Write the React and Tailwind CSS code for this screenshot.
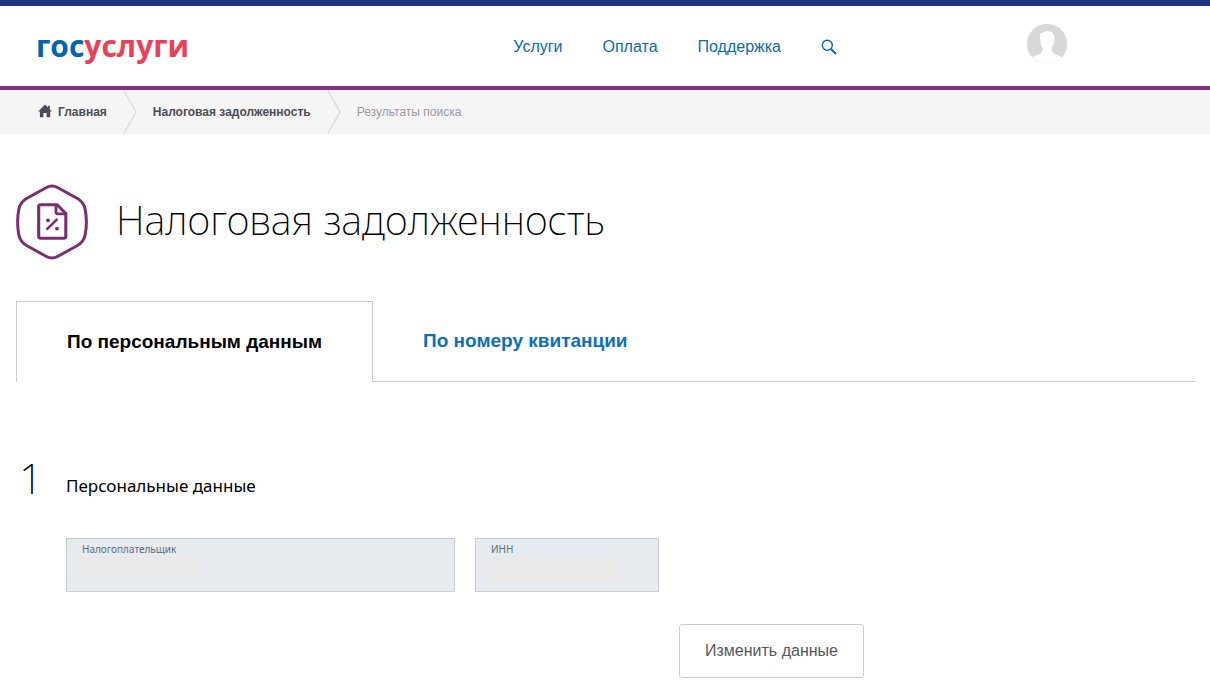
import React from "react";

const navLinks = ["Услуги", "Оплата", "Поддержка"];

function HomeIcon() {
  return (
    <svg viewBox="0 0 14 14" className="size-[14px] -mt-[2px]" fill="currentColor" aria-hidden="true">
      <path d="M7 0.600L9.900 3.400V1.700H11.800V5.200L13.900 7.400H12.200V13.300H8.600V9H5.400V13.300H1.900V7.400H0.100Z" />
    </svg>
  );
}

function SearchIcon() {
  return (
    <svg viewBox="0 0 16 16" className="size-4" fill="none" stroke="currentColor" aria-hidden="true">
      <circle cx="6.300" cy="6.300" r="5" strokeWidth="1.500" />
      <path d="M10 10l5 5" strokeWidth="2.200" />
    </svg>
  );
}

function Avatar() {
  return (
    <svg viewBox="0 0 40 40" className="size-10" aria-hidden="true">
      <circle cx="20" cy="20" r="20" fill="#d8d8d8" />
      <path
        d="M13.200 14.500V9.200c1.400.5 2.300-.6 3.600-1.300 1.700-1 4.600-1.100 6.900-.2 3.200 1.300 4.100 4.400 3.700 7.800-.3 3.800-1.200 6.200-2.700 8.300-.4 2.600.2 4.400 2 5.800 2 1.500 5.300 1.700 8.300 3.800C31 38 26 40.500 20 40.500S9 38 5 33.400c3-2.100 6.300-2.300 8.300-3.800 1.800-1.400 2.700-3.200 2.300-5.800-1.500-1.700-2.300-5.600-2.400-9.300z"
        fill="#fff"
      />
      <circle cx="20" cy="20" r="19.500" fill="none" stroke="#d8d8d8" strokeOpacity="0.250" />
    </svg>
  );
}

function Chevron() {
  return (
    <svg viewBox="0 0 14 44" className="h-11 w-[14px] shrink-0" fill="none" aria-hidden="true">
      <path d="M0.500 0L13 22L0.500 44" stroke="#dcdcdc" strokeWidth="1.300" />
    </svg>
  );
}

function TaxIcon() {
  return (
    <svg viewBox="0 0 72 76" className="h-[76px] w-[72px] shrink-0" fill="none" stroke="#7b2d72" aria-hidden="true">
      <path
        d="M30.500 3.500Q36 0.600 41.500 3.500L61 14.200Q67.500 17.800 69 24.500Q71.800 38 69 51.500Q67.500 58.200 61 61.800L41.500 72.500Q36 75.400 30.500 72.500L11 61.800Q4.500 58.200 3 51.500Q0.200 38 3 24.500Q4.500 17.800 11 14.200Z"
        strokeWidth="3"
      />
      <path d="M41 20.700H24.500Q22.700 20.700 22.700 22.500V52.300Q22.700 54.200 24.500 54.200H48Q49.800 54.200 49.800 52.300V29.500Z" strokeWidth="3.100" strokeLinejoin="round" />
      <path d="M40 21V27.700Q40 29.800 42 29.800H49" strokeWidth="2.800" />
      <path d="M30.500 45.700L41.500 34.800" strokeWidth="2.500" />
      <circle cx="32" cy="36.300" r="1.900" fill="#7b2d72" stroke="none" />
      <circle cx="41" cy="44.700" r="1.900" fill="#7b2d72" stroke="none" />
    </svg>
  );
}

function Header() {
  return (
    <header className="flex h-[90px] items-start border-t-[6px] border-b-4 border-t-[#20317f] border-b-[#882e7f] bg-white pl-9">
      <a href="#home" className="mt-5 font-['Open_Sans','Noto_Sans',sans-serif] text-[30px] leading-10 font-bold">
        <span className="text-[#0065b1]">гос</span>
        <span className="text-[#ee3f58]">услуги</span>
      </a>
      <nav className="mt-[29px] ml-auto flex h-6 items-center gap-10 text-base text-[#0b6bb0]">
        {navLinks.map((name) => (
          <a key={name} href="#section">{name}</a>
        ))}
        <button type="button" aria-label="Поиск">
          <SearchIcon />
        </button>
      </nav>
      <button type="button" aria-label="Профиль" className="mt-[18px] mr-[143px] ml-[190px]">
        <Avatar />
      </button>
    </header>
  );
}

function Breadcrumbs() {
  return (
    <nav className="flex h-11 items-center bg-[#f5f5f5] pl-[38px] text-xs text-[#4a4d52]">
      <a href="#main" className="mr-4 flex items-center gap-[6px] font-bold">
        <HomeIcon />
        Главная
      </a>
      <Chevron />
      <a href="#tax" className="mx-4 font-bold">Налоговая задолженность</a>
      <Chevron />
      <span className="ml-4 text-[#999b9e]">Результаты поиска</span>
    </nav>
  );
}

export default function App() {
  return (
    <div className="min-h-screen bg-white font-['Liberation_Sans',Arial,sans-serif] text-black">
      <Header />
      <Breadcrumbs />
      <main className="pt-[50px] pr-[14px] pb-4 pl-4">
        <div className="flex items-center gap-7">
          <TaxIcon />
          <h1 className="pb-1 font-['Noto_Sans','Open_Sans',sans-serif] text-[40px] leading-[52px] font-extralight">
            Налоговая задолженность
          </h1>
        </div>

        <div role="tablist" className="mt-[41px] flex text-[19px] leading-6 font-bold">
          <button type="button" role="tab" aria-selected="true" className="h-[81px] border border-b-0 border-[#c9cdd0] px-[50px]">
            По персональным данным
          </button>
          <div className="flex grow border-b border-[#c9cdd0]">
            <button type="button" role="tab" aria-selected="false" className="px-[50px] text-[#0b6fc0]">
              По номеру квитанции
            </button>
          </div>
        </div>

        <section className="mt-[70px]">
          <div className="flex items-end font-['Noto_Sans','Open_Sans',sans-serif]">
            <span className="w-[50px] pl-[3px] text-[42px] leading-[52px] font-extralight">1</span>
            <h2 className="pb-[6px] text-[17px] leading-6">Персональные данные</h2>
          </div>
          <form className="mt-[34px] ml-[50px] grid max-w-[798px] grid-cols-[389fr_184fr_185fr] gap-x-5 gap-y-8">
            <div className="h-[54px] border border-[#c8ced4] bg-[#e7ebef] px-[7px]">
              <label htmlFor="taxpayer" className="block pt-[3px] pl-2 font-['Noto_Sans',sans-serif] text-[10px] leading-[14px] text-[#5c6b7c]">
                Налогоплательщик
              </label>
              <input id="taxpayer" readOnly className="block h-5 w-1/3 bg-[#e9e9ea] px-2 text-sm outline-none" />
            </div>
            <div className="h-[54px] border border-[#c8ced4] bg-[#e7ebef] px-[13px]">
              <label htmlFor="inn" className="block pt-[3px] pl-[2px] font-['Noto_Sans',sans-serif] text-[10px] leading-[14px] text-[#5c6b7c]">
                ИНН
              </label>
              <input id="inn" readOnly className="mt-[2px] block h-6 w-5/6 bg-[#e9e9ea] text-sm outline-none" />
            </div>
            <button type="button" className="col-start-3 row-start-2 h-[54px] rounded-[3px] border border-[#c9cdd0] bg-white text-base text-[#54575c]">
              Изменить данные
            </button>
          </form>
        </section>
      </main>
    </div>
  );
}
